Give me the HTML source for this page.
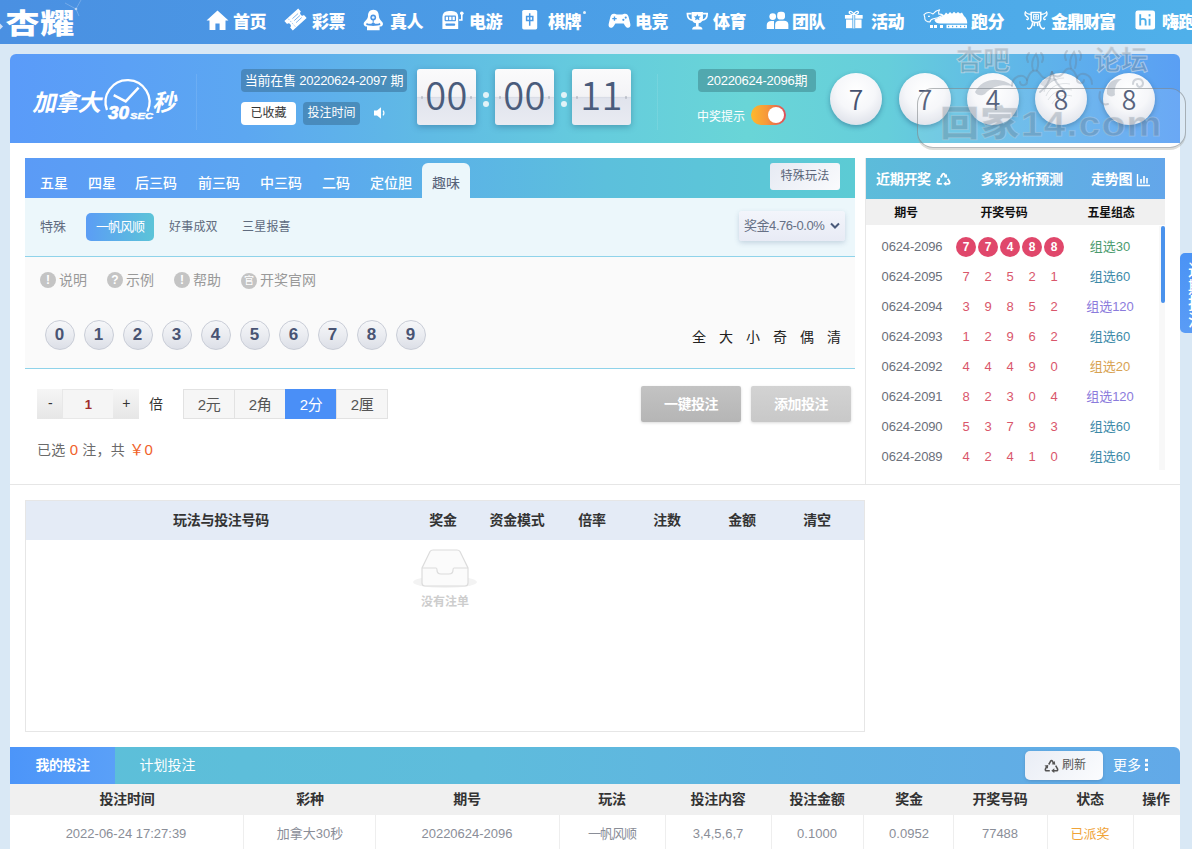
<!DOCTYPE html>
<html lang="zh-CN">
<head>
<meta charset="utf-8">
<title>加拿大30秒</title>
<style>
*{box-sizing:border-box;margin:0;padding:0}
html,body{width:1192px;height:849px;overflow:hidden}
body{background:#d9e8f5;font-family:"Liberation Sans","Noto Sans CJK SC",sans-serif;font-size:13px;color:#555;position:relative}
.abs{position:absolute}
/* NAV */
#nav{position:absolute;left:0;top:0;width:1192px;height:43px;background:linear-gradient(90deg,#4a90e2 0%,#4b9de6 45%,#4fb0ea 100%)}
#nav .it{position:absolute;top:0;height:43px;line-height:42px;color:#fff;font-family:"Liberation Serif","Noto Serif CJK SC",serif;font-weight:900;font-size:17px;white-space:nowrap;letter-spacing:-0.5px}
#nav svg{position:absolute}
#logo{position:absolute;left:5.5px;top:4.3px;font-family:"Liberation Sans","Noto Sans CJK SC",sans-serif;font-weight:900;font-size:34px;line-height:40px;color:#fff;letter-spacing:.7px;transform:scaleY(.834);transform-origin:0 50%;white-space:nowrap}

#nav{height:44px}
#nav .it{font-family:"Liberation Sans","Noto Sans CJK SC",sans-serif;font-weight:900;font-size:17px;letter-spacing:-0.6px;line-height:46px}
/* BANNER */
#banner{position:absolute;left:10px;top:54px;width:1170px;height:89px;border-radius:6px 6px 0 0;background:linear-gradient(90deg,#5a9bf9 0%,#5ca7f1 20%,#60bbe4 36%,#65ccdd 50%,#69d5d7 63%,#66cedb 75%,#60b7e8 86%,#5a9ff4 100%)}

#banner .pill{position:absolute;height:23px;line-height:23px;letter-spacing:-0.25px;border-radius:4px;color:#fff;font-size:13px;text-align:center;white-space:nowrap}
.flip{position:absolute;top:15px;width:59px;height:56px;border-radius:3px;background:linear-gradient(180deg,#fbfbfc 0%,#f3f3f6 49%,#d5d9e3 50%,#e1e4ed 53%,#e9ebf2 100%);box-shadow:0 2px 6px rgba(30,70,110,.35);color:#4a5c7c;font-family:"Noto Sans CJK SC","Liberation Sans",sans-serif;font-weight:350;font-size:38px;line-height:50px;text-align:center;letter-spacing:.5px}
.flip::before,.flip::after{content:"";position:absolute;top:27px;width:2px;height:3px;background:#bcc0ca;border-radius:1px}.flip::before{left:4px}.flip::after{right:4px}
.colon{position:absolute;width:6px;height:6px;border-radius:50%;background:#e2f3f8}
.ball{position:absolute;top:19px;width:52px;height:52px;border-radius:50%;background:radial-gradient(circle at 50% 35%,#ffffff 0%,#f6f7fa 45%,#dfe2ea 80%,#cfd3de 100%);box-shadow:0 2px 5px rgba(30,80,120,.45);color:#465270;font-family:"Noto Sans CJK SC","Liberation Sans",sans-serif;font-weight:350;font-size:26.5px;line-height:51px;text-align:center}
#main{position:absolute;left:10px;top:143px;width:1170px;height:706px;background:#fff}

/* PLAY PANEL */
#tabs{position:absolute;left:15px;top:15px;width:830px;height:40px;background:linear-gradient(90deg,#5b9bf6 0%,#5ba8ef 35%,#5cc0dc 70%,#5ccbd4 100%)}
#tabs .t{position:absolute;top:15px;color:#fff;font-size:14px;font-weight:500;line-height:20px;white-space:nowrap}
#tabs .act{position:absolute;left:397px;top:5px;width:48px;height:35px;background:#ecf7fb;border-radius:6px 6px 0 0;color:#566278;font-size:14px;line-height:40px;text-align:center}
#sub{position:absolute;left:15px;top:55px;width:830px;height:59px;background:#ecf7fb;border-bottom:1px solid #8fd3ea}
#sub .s{position:absolute;top:19px;font-size:13px;line-height:20px;color:#5f6b7e;white-space:nowrap}
#cont{position:absolute;left:15px;top:114px;width:830px;height:112px;background:#fafafa;border-bottom:1px solid #8fd3ea}
.hp{position:absolute;top:14px;height:18px;line-height:18px;font-size:14px;color:#999;white-space:nowrap}
.hp i{display:inline-block;width:16px;height:16px;border-radius:50%;background:#c4c4c4;color:#fff;font-style:normal;font-weight:700;font-size:12px;line-height:16px;text-align:center;vertical-align:1px;margin-right:3px}
.nb{position:absolute;top:63px;width:30px;height:30px;margin-left:.5px;border-radius:50%;border:1px solid #c9cdd7;background:linear-gradient(180deg,#f6f7f9 0%,#e9ebf0 55%,#dcdfe7 100%);color:#495473;font-weight:700;font-size:17px;line-height:28px;text-align:center}
.q{position:absolute;top:71px;font-size:14px;line-height:18px;color:#222;width:14px;text-align:center}
.mb{position:absolute;top:0;height:30px;line-height:29px;text-align:center;font-size:15px;color:#555;background:#f6f6f6;border:1px solid #e2e2e2;letter-spacing:-0.5px}
.bigbtn{position:absolute;top:243px;width:100px;height:36px;border-radius:2px;color:#fff;font-weight:700;font-size:14px;line-height:36px;text-align:center;letter-spacing:-0.5px;box-shadow:0 1px 3px rgba(0,0,0,.15)}

/* RIGHT PANEL */
#rp{position:absolute;left:855px;top:15px;width:300px;height:327px;border-left:1px solid #e8e8e8}
#rp .hd{position:absolute;left:0;top:0;width:299px;height:41px;background:linear-gradient(90deg,#5cbcda 0%,#60b0e2 55%,#63a6ea 100%);color:#fff;font-weight:700;font-size:14px;line-height:42px;letter-spacing:-0.3px}
#rp .hd span{position:absolute;top:0;white-space:nowrap}
#rp .th{position:absolute;left:0;top:41px;width:299px;height:26px;background:#f0f0f0;color:#111;font-weight:700;font-size:12px;line-height:28px;letter-spacing:-0.3px}
#rp .th span,#rp .r span{position:absolute;top:0;text-align:center;white-space:nowrap}
#rp .r{position:absolute;left:0;width:299px;height:30px;line-height:30px;font-size:13px;color:#6b6f7a}
#rp .r .p{left:15px;width:62px;letter-spacing:-0.15px}
#rp .r b{position:absolute;top:0;width:20px;text-align:center;font-weight:400;color:#d9566b}
#rp .r b.c{top:5px;height:20px;line-height:20px;border-radius:50%;background:#e0476b;color:#fff;font-weight:700;font-size:12px}
#rp .r .g{left:204px;width:80px}
.g30{color:#4b9b6e}.g60{color:#3d8aa8}.g120{color:#8b7bdc}.g20{color:#d8a252}
/* BET TABLE */
#bt{position:absolute;left:15px;top:357px;width:840px;height:232px;border:1px solid #e6e6e6}
#bt .h{position:absolute;left:0;top:0;width:838px;height:39px;background:#e4ebf6;color:#333;font-weight:700;font-size:14px;line-height:39px;letter-spacing:-0.3px}
#bt .h span{position:absolute;top:0;width:120px;text-align:center;white-space:nowrap}
/* BOTTOM */
#bb{position:absolute;left:0;top:604px;width:1170px;height:37px;border-radius:0 6px 0 0;background:linear-gradient(90deg,#5cc0d8 0%,#5ebcdc 40%,#62a9e8 100%);color:#fff;font-size:14px;line-height:37px}
#bth{position:absolute;left:0;top:641px;width:1170px;height:31px;background:#f0f0f0;color:#333;font-weight:700;font-size:14px;line-height:31px;letter-spacing:-0.3px}
#btr{position:absolute;left:0;top:672px;width:1170px;height:34px;color:#8a8e98;font-size:13px;line-height:38px}
#bth span,#btr span{position:absolute;top:0;width:140px;text-align:center;white-space:nowrap}
#btr i{position:absolute;top:0;width:1px;height:34px;background:#eee}
</style>
</head>
<body>
<div id="nav">
  <div id="logo">杏耀</div>
  <div style="position:absolute;left:-3px;top:24px;width:5px;height:5px;background:#cfe0f6;transform:rotate(45deg)"></div>
  <svg style="left:60px;top:0" width="30" height="22" viewBox="0 0 30 22"><path d="M16 9 L5 3 M16 9 L21 0 M16 9 L19 16" stroke="#fff" stroke-opacity=".22" stroke-width="1" fill="none"/><circle cx="16" cy="9" r="1.3" fill="#fff" fill-opacity=".55"/></svg>
  <!-- home -->
  <svg style="left:206px;top:10px" width="23" height="21" viewBox="0 0 23 21"><path d="M11.5 0.5 L22.5 10.5 L19.5 10.5 L19.5 20 L13.6 20 L13.6 13.5 L9.4 13.5 L9.4 20 L3.5 20 L3.5 10.5 L0.5 10.5 Z" fill="#fff"/></svg>
  <div class="it" style="left:233px">首页</div>
  <!-- ticket -->
  <svg style="left:283px;top:7px" width="25" height="25" viewBox="0 0 25 25"><g transform="rotate(-42 12.5 12.5)"><path d="M3.2 6.2 H21.8 V10.2 A2.3 2.3 0 0 0 21.8 14.8 V18.8 H3.2 V14.8 A2.3 2.3 0 0 0 3.2 10.2 Z" fill="#fff"/><path d="M7.6 7 V18" stroke="#4a93e4" stroke-opacity=".55" stroke-width=".9" stroke-dasharray="1.6 1.4"/><path d="M10.8 9.8 H18.4 M10.8 12.5 H18.4 M10.8 15.2 H18.4" stroke="#4a93e4" stroke-opacity=".7" stroke-width=".9"/></g></svg>
  <div class="it" style="left:312px">彩票</div>
  <!-- live person -->
  <svg style="left:363px;top:9px" width="21" height="22" viewBox="0 0 21 22"><path d="M10.4 0.7 C6.6 0.7 5 3.6 5 6.6 C5 10 2.6 11.4 1 13.6 C0.2 15.2 0.8 16.8 2.6 17.6 L4 17.6 L4 21.2 L16.6 21.2 L16.6 17.6 L18.2 17.6 C20 16.8 20.4 15.2 19.6 13.6 C18 11.4 15.8 10 15.8 6.6 C15.8 3.6 14.2 0.7 10.4 0.7 Z" fill="#fff"/><circle cx="10.2" cy="8.5" r="2.9" fill="#4a95e5"/><circle cx="10.2" cy="8.5" r="1.35" fill="#e8f4ff"/><path d="M10.2 11 V13.6" stroke="#4a95e5" stroke-width="1"/><path d="M3.6 14 Q7 15.6 10.2 14.2 Q13.4 15.6 17 14 L17.4 16 Q13.4 17 10.2 16.6 Q7 17 3.2 16 Z" fill="#4a95e5"/><circle cx="10.2" cy="15.3" r="1.8" fill="#4a95e5"/></svg>
  <div class="it" style="left:390px">真人</div>
  <!-- slot machine -->
  <svg style="left:441px;top:10px" width="23" height="20" viewBox="0 0 23 20"><path d="M1.4 19 V7 Q1.4 1 8 1 H10.6 Q17.2 1 17.2 7 V19 Z" fill="#fff"/><rect x="3.6" y="5.6" width="11.4" height="5.6" rx="1" fill="#4a97e5"/><rect x="4.8" y="6.7" width="2.3" height="3.4" fill="#fff"/><rect x="8.15" y="6.7" width="2.3" height="3.4" fill="#fff"/><rect x="11.5" y="6.7" width="2.3" height="3.4" fill="#fff"/><rect x="4.4" y="13.6" width="9.8" height="2.2" rx="1" fill="#4a97e5"/><circle cx="20.8" cy="3.2" r="1.8" fill="#fff"/><path d="M20.8 3.4 V10 H18" stroke="#fff" stroke-width="1.6" fill="none"/></svg>
  <div class="it" style="left:469px">电游</div>
  <!-- card -->
  <svg style="left:521px;top:9px" width="18" height="22" viewBox="0 0 18 22"><rect x="1.2" y="1" width="15" height="19.4" rx="1.6" fill="#fff"/><path d="M8.7 4.2 V16.8 M5.6 7.4 H11.8 V11.4 H5.6 Z" stroke="#4a9ae6" stroke-width="1.5" fill="none"/></svg>
  <div class="it" style="left:548px">棋牌</div>
  <div style="position:absolute;left:583px;top:11px;width:3px;height:3px;border-radius:50%;background:#e6f2fc"></div>
  <!-- gamepad -->
  <svg style="left:607.5px;top:13px" width="23" height="15.5" viewBox="0 0 27 19" preserveAspectRatio="none"><path d="M7 1 C4.4 1 3.2 2.8 2.6 5.4 L0.8 13.5 C0.2 16.4 1.6 18 3.4 18 C5 18 6 17 7.2 15.2 L8.6 13 L18.4 13 L19.8 15.2 C21 17 22 18 23.6 18 C25.4 18 26.8 16.4 26.2 13.5 L24.4 5.4 C23.8 2.8 22.6 1 20 1 C18.6 1 18 1.8 16.6 1.8 L10.4 1.8 C9 1.8 8.4 1 7 1 Z" fill="#fff"/><path d="M7.6 4.4 V9.6 M5 7 H10.2" stroke="#4a9de7" stroke-width="1.6"/><circle cx="18" cy="8.4" r="1.3" fill="#4a9de7"/><circle cx="20.8" cy="5.6" r="1.3" fill="#4a9de7"/></svg>
  <div class="it" style="left:635px">电竞</div>
  <!-- trophy -->
  <svg style="left:686px;top:11.3px" width="22.6" height="19.3" viewBox="0 0 24 22" preserveAspectRatio="none"><path d="M6 1 H18 V8 C18 12 15.4 14.2 12 14.2 C8.6 14.2 6 12 6 8 Z" fill="#fff"/><path d="M6 3 H1.5 C1.5 7.5 3.5 10 7 10.4 M18 3 H22.5 C22.5 7.5 20.5 10 17 10.4" stroke="#fff" stroke-width="1.8" fill="none"/><rect x="10.6" y="13.5" width="2.8" height="4.5" fill="#fff"/><path d="M6.5 21 C6.5 18.4 8.4 17.4 12 17.4 C15.6 17.4 17.5 18.4 17.5 21 Z" fill="#fff"/><path d="M12 3.6 L13.1 6 L15.7 6.3 L13.8 8 L14.3 10.6 L12 9.3 L9.7 10.6 L10.2 8 L8.3 6.3 L10.9 6 Z" fill="#4aa0e7"/></svg>
  <div class="it" style="left:713px">体育</div>
  <!-- team -->
  <svg style="left:765.7px;top:10.7px" width="23.3" height="19.5" viewBox="0 0 25 21" preserveAspectRatio="none"><circle cx="7.2" cy="6" r="3.6" fill="#fff"/><path d="M0.8 19.5 V15.2 C0.8 12.4 3 10.8 5.6 10.8 H8.6 V19.5 Z" fill="#fff"/><rect x="12" y="0.8" width="8.4" height="8.4" rx="3.4" fill="#fff"/><path d="M9.8 19.5 V14.6 C9.8 12 11.8 10.6 14.2 10.6 H19.6 C22 10.6 24 12 24 14.6 V19.5 Z" fill="#fff"/></svg>
  <div class="it" style="left:792px">团队</div>
  <!-- gift -->
  <svg style="left:843.9px;top:10.2px" width="19.6" height="19.2" viewBox="0 0 21 23" preserveAspectRatio="none"><path d="M10.5 5.6 C8 5.4 5.2 4.6 5.6 2.6 C6 0.8 9.4 1.4 10.5 5.6 C11.6 1.4 15 0.8 15.4 2.6 C15.8 4.6 13 5.4 10.5 5.6 Z" fill="none" stroke="#fff" stroke-width="1.5"/><rect x="1" y="6" width="19" height="4.4" fill="#fff"/><rect x="2.2" y="11.4" width="16.6" height="10.4" fill="#fff"/><rect x="9" y="6" width="3" height="16" fill="#4aa5e8"/><rect x="9.9" y="6" width="1.2" height="16" fill="#fff"/></svg>
  <div class="it" style="left:871px">活动</div>
  <!-- rhino -->
  <svg style="left:922px;top:9px" width="46" height="21" viewBox="0 0 46 21"><path d="M2 5.6 C4.4 3.2 8 3 11 5 C12.6 2.8 14.8 1.4 17.6 0.8 C16.4 2.6 16.2 4 16.8 5.2 C18.4 5 20 5.4 21.4 6.4 L19 7 C17 8.6 14 9.4 11.4 9.8 C9.4 10.2 8.2 11.6 8 13 L5.4 12.6 C3.6 12 2.6 10.2 2.8 8.4 Z M6 7.4 L8 7.2" fill="none" stroke="#fff" stroke-width="1.1" stroke-linejoin="round"/><path d="M12.6 10.4 L21.8 6.4 L24 3.6 L26 5.2 L28 3 L30 4.8 L32 2.8 L34 4.6 L36 3 L38 4.6 L40 3.6 L42 7 C44.4 9 45.2 11.4 45.2 13.6 L45.2 14.6 L18 14.6 C15 14.6 13.4 13.6 12.6 11.6 Z" fill="#fff"/><g fill="#fff"><rect x="8" y="16" width="3" height="3"/><rect x="12" y="16" width="3" height="3"/><rect x="18" y="16" width="3" height="3"/><rect x="24.5" y="15.8" width="20.5" height="3.4"/></g><g fill="#4cabe9"><rect x="26" y="16.8" width="1.2" height="1.4"/><rect x="30" y="16.8" width="1.2" height="1.4"/><rect x="34" y="16.8" width="1.2" height="1.4"/><rect x="38" y="16.8" width="1.2" height="1.4"/><rect x="42" y="16.8" width="1.2" height="1.4"/></g></svg>
  <div class="it" style="left:971px">跑分</div>
  <!-- ding -->
  <svg style="left:1023.5px;top:10.5px" width="24" height="19.5" viewBox="0 0 24 19.5"><path d="M7.2 1.6 H16.8 V8.6 C16.8 10.4 15.4 11.4 12 11.4 C8.6 11.4 7.2 10.4 7.2 8.6 Z" fill="none" stroke="#fff" stroke-width="1.5"/><path d="M9.4 3.6 H14.6 V8.2 H9.4 Z M12 3.6 V8.2 M9.4 5.9 H14.6" stroke="#fff" stroke-width="1" fill="none"/><path d="M7.2 3.4 C4.6 3.2 2.2 2.4 1.4 1 C0.6 3 1.2 4.6 2.6 5.4 C4 6.2 4.6 7 4.2 8 C3.8 9 2.6 8.8 2.6 7.8 M16.8 3.4 C19.4 3.2 21.8 2.4 22.6 1 C23.4 3 22.8 4.6 21.4 5.4 C20 6.2 19.4 7 19.8 8 C20.2 9 21.4 8.8 21.4 7.8" stroke="#fff" stroke-width="1.3" fill="none"/><path d="M8.6 11.2 C8.4 14 7.6 16.4 5.6 17.6 C4.4 18.2 3.4 17.6 3.8 16.4 M15.4 11.2 C15.6 14 16.4 16.4 18.4 17.6 C19.6 18.2 20.6 17.6 20.2 16.4 M10.6 11.6 L10.2 15.2 M13.4 11.6 L13.8 15.2" stroke="#fff" stroke-width="1.6" fill="none"/></svg>
  <div class="it" style="left:1051px;letter-spacing:-1px">金鼎财富</div>
  <!-- hi -->
  <svg style="left:1135px;top:10px" width="20.5" height="20" viewBox="0 0 22 22" preserveAspectRatio="none"><rect x="0.5" y="0.5" width="21" height="21" rx="2.6" fill="#fff"/><path d="M5.6 4.6 V17 M5.6 11.8 C5.6 9 11.4 9 11.4 12 V17 M15.6 9.6 V17" stroke="#4cafea" stroke-width="2" fill="none"/><rect x="14.6" y="4.6" width="2" height="2.4" fill="#4cafea"/></svg>
  <div class="it" style="left:1162px">嗨跑</div>

</div>
<div id="banner">
  <!-- logo -->
  <div style="position:absolute;left:23.5px;top:34px;color:#fff;font-size:23.5px;line-height:30px;font-weight:700;transform:skewX(-13deg);letter-spacing:-0.8px;white-space:nowrap">加拿大</div>
  <svg style="position:absolute;left:88px;top:21px" width="70" height="52" viewBox="0 0 70 52"><path d="M9 35 A22 22 0 1 1 49.4 36.5" fill="none" stroke="#fff" stroke-width="2.3"/><path d="M15.7 20.2 L27.7 26.4 L40.6 12.7" fill="none" stroke="#fff" stroke-width="2.5"/><text x="10" y="44.4" fill="#fff" font-family="Liberation Sans,sans-serif" font-weight="700" font-style="italic" font-size="18" textLength="21" lengthAdjust="spacingAndGlyphs" stroke="#fff" stroke-width=".7">30</text><text x="32" y="44.4" fill="#fff" font-family="Liberation Sans,sans-serif" font-weight="700" font-style="italic" font-size="8.6" textLength="23" lengthAdjust="spacingAndGlyphs" stroke="#fff" stroke-width=".4">SEC</text></svg>
  <div style="position:absolute;left:143.5px;top:34px;color:#fff;font-size:23.5px;line-height:30px;font-weight:700;transform:skewX(-13deg);white-space:nowrap">秒</div>
  <div style="position:absolute;left:186px;top:20px;width:1px;height:56px;background:rgba(255,255,255,.1)"></div>
  <div class="pill" style="left:231px;top:15px;width:166px;background:rgba(62,118,160,.62)">当前在售 20220624-2097 期</div>
  <div class="pill" style="left:231px;top:48px;width:55px;background:#fff;color:#333;font-size:12px;letter-spacing:0">已收藏</div>
  <div class="pill" style="left:293px;top:48px;width:57px;background:rgba(62,118,160,.62);font-size:12px;letter-spacing:0">投注时间</div>
  <svg style="position:absolute;left:363px;top:52px" width="14" height="14" viewBox="0 0 14 14"><path d="M1 4.6 H4 L8 1.2 V12.8 L4 9.4 H1 Z" fill="#fff"/><path d="M10 4.6 C11.2 5.8 11.2 8.2 10 9.4" stroke="#fff" stroke-width="1.3" fill="none"/></svg>
  <div class="flip" style="left:407px">00</div>
  <div class="colon" style="left:472.5px;top:37.5px"></div><div class="colon" style="left:472.5px;top:47px"></div>
  <div class="flip" style="left:485px">00</div>
  <div class="colon" style="left:550.5px;top:37.5px"></div><div class="colon" style="left:550.5px;top:47px"></div>
  <div class="flip" style="left:562px">11</div>
  <div style="position:absolute;left:647px;top:20px;width:1px;height:56px;background:rgba(255,255,255,.1)"></div>
  <div class="pill" style="left:688px;top:15px;width:118px;background:rgba(66,140,146,.6)">20220624-2096期</div>
  <div style="position:absolute;left:687px;top:55px;color:#fff;font-size:12px;line-height:16px;white-space:nowrap">中奖提示</div>
  <div style="position:absolute;left:741px;top:51px;width:35px;height:20px;border-radius:10px;background:linear-gradient(90deg,#fdb92c 0%,#f7983a 45%,#de4c5c 100%)"><div style="position:absolute;right:2px;top:2px;width:16px;height:16px;border-radius:50%;background:#fff"></div></div>
  <div class="ball" style="left:820px">7</div>
  <div class="ball" style="left:889px">7</div>
  <div class="ball" style="left:957px">4</div>
  <div class="ball" style="left:1025px">8</div>
  <div class="ball" style="left:1093px">8</div>
</div>
<div id="main">
  <div id="tabs">
    <div class="t" style="left:15px">五星</div>
    <div class="t" style="left:63px">四星</div>
    <div class="t" style="left:110px">后三码</div>
    <div class="t" style="left:173px">前三码</div>
    <div class="t" style="left:235px">中三码</div>
    <div class="t" style="left:297px">二码</div>
    <div class="t" style="left:345px">定位胆</div>
    <div class="act">趣味</div>
    <div style="position:absolute;left:745px;top:5px;width:70px;height:27px;border-radius:3px;background:linear-gradient(135deg,#e6eaf3,#fafbfd);color:#5a6478;font-size:12px;line-height:26px;text-align:center;letter-spacing:.2px">特殊玩法</div>
  </div>
  <div id="sub">
    <div class="s" style="left:15px">特殊</div>
    <div style="position:absolute;left:61px;top:15px;width:68px;height:28px;border-radius:5px;background:linear-gradient(90deg,#5b9df5,#5cc4d8);color:#fff;font-size:13px;line-height:28px;text-align:center;letter-spacing:-1px">一帆风顺</div>
    <div class="s" style="left:144px;font-size:12px;letter-spacing:.2px">好事成双</div>
    <div class="s" style="left:217px;font-size:12px;letter-spacing:.2px">三星报喜</div>
    <div style="position:absolute;left:714px;top:13px;width:106px;height:30px;border-radius:3px;background:linear-gradient(180deg,#f3f5fb,#e8ebf5);box-shadow:0 2px 5px rgba(80,110,150,.25);color:#667085;font-size:13px;line-height:29px;padding-left:5px;white-space:nowrap;letter-spacing:-0.45px">奖金4.76-0.0%<svg style="position:absolute;right:5px;top:11px" width="10" height="8" viewBox="0 0 10 8"><path d="M1 1.5 L5 5.5 L9 1.5" fill="none" stroke="#4a5a7a" stroke-width="2"/></svg></div>
  </div>
  <div id="cont">
    <div class="hp" style="left:15px"><i>!</i>说明</div>
    <div class="hp" style="left:82px"><i>?</i>示例</div>
    <div class="hp" style="left:149px"><i>!</i>帮助</div>
    <div class="hp" style="left:216px"><i style="font-size:10px;font-weight:400">官</i>开奖官网</div>
    <div class="nb" style="left:19px">0</div>
    <div class="nb" style="left:58px">1</div>
    <div class="nb" style="left:97px">2</div>
    <div class="nb" style="left:136px">3</div>
    <div class="nb" style="left:175px">4</div>
    <div class="nb" style="left:214px">5</div>
    <div class="nb" style="left:253px">6</div>
    <div class="nb" style="left:292px">7</div>
    <div class="nb" style="left:331px">8</div>
    <div class="nb" style="left:370px">9</div>
    <div class="q" style="left:667px">全</div>
    <div class="q" style="left:694px">大</div>
    <div class="q" style="left:721px">小</div>
    <div class="q" style="left:748px">奇</div>
    <div class="q" style="left:775px">偶</div>
    <div class="q" style="left:802px">清</div>
  </div>
  <!-- multiplier row -->
  <div style="position:absolute;left:27px;top:246px;width:360px;height:30px">
    <div class="mb" style="left:0;width:26px;background:linear-gradient(180deg,#f5f5f5,#e6e6e6);border:0;color:#333;font-size:14px">-</div>
    <div class="mb" style="left:25px;width:52px;background:#f5f5f5;border:1px solid #e8e8e8;color:#a02c2c;font-weight:700;font-size:13px">1</div>
    <div class="mb" style="left:76px;width:26px;background:linear-gradient(180deg,#f5f5f5,#e6e6e6);border:0;color:#333;font-size:14px">+</div>
    <div style="position:absolute;left:112px;top:0;line-height:30px;font-size:14px;color:#333">倍</div>
    <div class="mb" style="left:146px;width:52px">2元</div>
    <div class="mb" style="left:197px;width:52px">2角</div>
    <div class="mb" style="left:248px;width:52px;background:#4a8ff7;border-color:#4a8ff7;color:#fff">2分</div>
    <div class="mb" style="left:299px;width:52px">2厘</div>
  </div>
  <div class="bigbtn" style="left:631px;background:linear-gradient(180deg,#c3c3c3,#b5b5b5)">一键投注</div>
  <div class="bigbtn" style="left:741px;background:linear-gradient(180deg,#d3d3d3,#c8c8c8)">添加投注</div>
  <div style="position:absolute;left:27px;top:297px;font-size:14px;line-height:20px;color:#6a6a6a;white-space:nowrap;letter-spacing:.25px">已选 <span style="color:#f0622a;font-size:15px">0</span> 注，共 <span style="color:#f0622a;font-size:15px">￥0</span></div>
  <div id="rp">
    <div class="hd"><span style="left:10px">近期开奖</span><svg style="position:absolute;left:70px;top:14px" width="15" height="14" viewBox="0 0 30 28"><g fill="none" stroke="#fff" stroke-width="3.6" stroke-linejoin="round"><path d="M9.5 11 L13 4.6 Q15 1.6 17 4.6 L19.4 8.8"/><path d="M23.4 13.4 L27 19.6 Q28.4 23.4 24.4 23.6 L18.6 23.6"/><path d="M11.6 23.6 L5.6 23.6 Q1.6 23.4 3 19.6 L5.4 15.4"/></g><g fill="#fff"><path d="M15.4 10.6 L22.6 11.6 L21.4 4.2 Z"/><path d="M20.6 18.6 L14.6 23.6 L20.6 28 Z"/><path d="M1 13.2 L8.4 12 L7.8 19.4 Z"/></g></svg><span style="left:114.5px">多彩分析预测</span><span style="left:225px">走势图</span><svg style="position:absolute;left:270px;top:15px" width="15" height="14" viewBox="0 0 15 14"><path d="M1.5 1 V12.5 H14" fill="none" stroke="#fff" stroke-width="1.4"/><path d="M5 10.5 V6 M8 10.5 V3 M11 10.5 V5" stroke="#fff" stroke-width="1.6"/></svg></div>
    <div class="th"><span style="left:14px;width:52px">期号</span><span style="left:98px;width:80px">开奖号码</span><span style="left:205px;width:80px">五星组态</span></div>
    <div class="r" style="top:74px"><span class="p">0624-2096</span><b class="c" style="left:90px">7</b><b class="c" style="left:112px">7</b><b class="c" style="left:134px">4</b><b class="c" style="left:156px">8</b><b class="c" style="left:178px">8</b><span class="g g30">组选30</span></div>
    <div class="r" style="top:104px"><span class="p">0624-2095</span><b style="left:90px">7</b><b style="left:112px">2</b><b style="left:134px">5</b><b style="left:156px">2</b><b style="left:178px">1</b><span class="g g60">组选60</span></div>
    <div class="r" style="top:134px"><span class="p">0624-2094</span><b style="left:90px">3</b><b style="left:112px">9</b><b style="left:134px">8</b><b style="left:156px">5</b><b style="left:178px">2</b><span class="g g120">组选120</span></div>
    <div class="r" style="top:164px"><span class="p">0624-2093</span><b style="left:90px">1</b><b style="left:112px">2</b><b style="left:134px">9</b><b style="left:156px">6</b><b style="left:178px">2</b><span class="g g60">组选60</span></div>
    <div class="r" style="top:194px"><span class="p">0624-2092</span><b style="left:90px">4</b><b style="left:112px">4</b><b style="left:134px">4</b><b style="left:156px">9</b><b style="left:178px">0</b><span class="g g20">组选20</span></div>
    <div class="r" style="top:224px"><span class="p">0624-2091</span><b style="left:90px">8</b><b style="left:112px">2</b><b style="left:134px">3</b><b style="left:156px">0</b><b style="left:178px">4</b><span class="g g120">组选120</span></div>
    <div class="r" style="top:254px"><span class="p">0624-2090</span><b style="left:90px">5</b><b style="left:112px">3</b><b style="left:134px">7</b><b style="left:156px">9</b><b style="left:178px">3</b><span class="g g60">组选60</span></div>
    <div class="r" style="top:284px"><span class="p">0624-2089</span><b style="left:90px">4</b><b style="left:112px">2</b><b style="left:134px">4</b><b style="left:156px">1</b><b style="left:178px">0</b><span class="g g60">组选60</span></div>
    <div style="position:absolute;left:293px;top:68px;width:6px;height:244px;background:#f8f8f8"></div>
    <div style="position:absolute;left:295px;top:68px;width:4px;height:77px;border-radius:2px;background:#4a92ec"></div>
  </div>
  <div style="position:absolute;left:0;top:341px;width:1170px;height:1px;background:#e6e6e6"></div>
  <div id="bt">
    <div class="h"><span style="left:135px">玩法与投注号码</span><span style="left:357px">奖金</span><span style="left:431px">资金模式</span><span style="left:506px">倍率</span><span style="left:581px">注数</span><span style="left:656px">金额</span><span style="left:731px">清空</span></div>
    <svg style="position:absolute;left:386px;top:46px" width="66" height="46" viewBox="0 0 66 46"><ellipse cx="33" cy="35" rx="32" ry="6" fill="#f3f3f3"/><path d="M10 21 L18 4.5 Q19 3 21 3 H45 Q47 3 48 4.5 L56 21 V36 Q56 39 53 39 H13 Q10 39 10 36 Z" fill="#fbfbfb" stroke="#dcdcdc" stroke-width="1.2"/><path d="M10 21 H24 Q25 21 25 23 Q25 27 29 27 H37 Q41 27 41 23 Q41 21 42 21 H56" fill="none" stroke="#dcdcdc" stroke-width="1.2"/></svg>
    <div style="position:absolute;left:359px;top:93px;width:120px;text-align:center;color:#cdcdcd;font-size:12px;line-height:16px;font-weight:700">没有注单</div>
  </div>
  <div id="bb">
    <div style="position:absolute;left:0;top:0;width:105px;height:37px;background:linear-gradient(90deg,#4c95f9,#5aa0f8);text-align:center;font-weight:700;letter-spacing:-0.5px">我的投注</div>
    <div style="position:absolute;left:115px;top:0;width:85px;text-align:center">计划投注</div>
    <div style="position:absolute;left:1015px;top:4px;width:78px;height:29px;border-radius:5px;background:linear-gradient(135deg,#e9edf5,#fbfcfe);box-shadow:0 1px 3px rgba(60,90,130,.3);color:#555;font-size:12px;line-height:29px;padding-left:37px;letter-spacing:0"><svg style="position:absolute;left:19px;top:8px" width="15" height="14" viewBox="0 0 30 28"><g fill="none" stroke="#555" stroke-width="3.2" stroke-linejoin="round"><path d="M9.5 11 L13 4.6 Q15 1.6 17 4.6 L19.4 8.8"/><path d="M23.4 13.4 L27 19.6 Q28.4 23.4 24.4 23.6 L18.6 23.6"/><path d="M11.6 23.6 L5.6 23.6 Q1.6 23.4 3 19.6 L5.4 15.4"/></g><g fill="#555"><path d="M15.4 10.6 L22.6 11.6 L21.4 4.2 Z"/><path d="M20.6 18.6 L14.6 23.6 L20.6 28 Z"/><path d="M1 13.2 L8.4 12 L7.8 19.4 Z"/></g></svg>刷新</div>
    <div style="position:absolute;left:1103px;top:0;white-space:nowrap">更多<span style="display:inline-block;width:3px;height:13px;margin-left:4px;vertical-align:-1px;background:radial-gradient(circle,#fff 1.4px,transparent 1.6px) 0 0/3px 4.6px repeat-y"></span></div>
  </div>
  <div id="bth"><span style="left:47px">投注时间</span><span style="left:230px">彩种</span><span style="left:387px">期号</span><span style="left:532px">玩法</span><span style="left:638px">投注内容</span><span style="left:737px">投注金额</span><span style="left:829px">奖金</span><span style="left:920px">开奖号码</span><span style="left:1010px">状态</span><span style="left:1076px">操作</span></div>
  <div id="btr"><span style="left:46px">2022-06-24 17:27:39</span><span style="left:230px">加拿大30秒</span><span style="left:387px">20220624-2096</span><span style="left:532px;letter-spacing:-1px">一帆风顺</span><span style="left:638px">3,4,5,6,7</span><span style="left:737px">0.1000</span><span style="left:829px">0.0952</span><span style="left:920px">77488</span><span style="left:1010px;color:#f0a338">已派奖</span>
    <i style="left:233px"></i><i style="left:365px"></i><i style="left:549px"></i><i style="left:655px"></i><i style="left:761px"></i><i style="left:853px"></i><i style="left:943px"></i><i style="left:1037px"></i><i style="left:1123px"></i>
  </div>
</div>

<!-- watermark -->
<div style="position:absolute;left:917px;top:88px;width:269px;height:60px;border-radius:16px;border:1px solid rgba(120,125,130,.55);background:rgba(255,255,255,.10);box-shadow:0 2px 0 rgba(160,160,150,.35)"></div>
<div style="position:absolute;left:956px;top:46px;font-size:27px;line-height:30px;font-weight:700;color:rgba(130,140,150,.38);-webkit-text-stroke:1px rgba(225,232,240,.55);white-space:nowrap;letter-spacing:0">杏吧</div>
<div style="position:absolute;left:1094px;top:46px;font-size:27px;line-height:30px;font-weight:700;color:rgba(130,140,150,.38);-webkit-text-stroke:1px rgba(225,232,240,.55);white-space:nowrap">论坛</div>
<svg style="position:absolute;left:940px;top:40px" width="252" height="112" viewBox="940 40 252 112"><g fill="none" stroke="rgba(105,120,135,.30)" stroke-width="2" stroke-linecap="round"><path d="M1012 86 C1012 76 1024 72 1027 80 C1028 86 1020 87 1020 82"/><path d="M1027 80 C1030 70 1036 68 1040 74 C1044 80 1050 80 1052 72"/><path d="M1033 70 C1031 64 1033 58 1036 54 C1038 58 1039 64 1037 70"/><path d="M1028 62 C1026 58 1027 55 1029 53 M1042 62 C1044 58 1043 55 1041 53"/><path d="M1092 84 C1092 74 1080 70 1077 78 C1076 84 1084 85 1084 80"/><path d="M1077 78 C1074 68 1068 66 1064 72 C1060 78 1054 78 1052 72"/><path d="M1071 68 C1069 62 1071 56 1074 52 C1076 56 1077 62 1075 68"/><path d="M1066 60 C1064 56 1065 53 1067 51 M1080 60 C1082 56 1081 53 1079 51"/><path d="M1052 72 C1050 80 1046 88 1040 92 M1052 72 C1054 80 1058 86 1064 90"/><path d="M1133 84 C1133 78 1142 77 1143 83 C1143 88 1137 88 1137 84"/><path d="M1100 92 C1098 100 1102 106 1108 104"/></g><g fill="rgba(105,120,135,.30)"><path d="M975 92 C982 78 1000 76 1013 86 C1002 84 992 86 985 94 C982 96 977 96 975 92 Z"/><path d="M1107 94 C1106 84 1112 78 1122 79 C1116 82 1114 88 1115 95 C1113 97 1109 97 1107 94 Z"/><path d="M1040 84 C1044 78 1052 76 1058 80 C1052 80 1048 84 1046 88 Z" fill-opacity=".7"/></g><g fill="none" stroke="rgba(150,160,170,.28)" stroke-width="1"><path d="M1046 96 C1050 86 1060 82 1070 84 M1048 100 C1054 90 1064 88 1072 90 M1052 104 C1056 96 1064 94 1072 96 M1044 92 C1046 84 1054 78 1064 78"/></g></svg>
<div style="position:absolute;left:940px;top:98px;font-size:35px;line-height:52px;font-weight:900;color:rgba(110,125,140,.36);-webkit-text-stroke:1px rgba(215,225,235,.3);white-space:nowrap;letter-spacing:1px;transform:scaleX(1.12);transform-origin:0 0;font-family:'Liberation Sans','Noto Sans CJK SC',sans-serif">回家14.com</div>
<!-- side tab -->
<div style="position:absolute;left:1180px;top:253px;width:20px;height:80px;border-radius:5px 0 0 5px;background:linear-gradient(180deg,#4a93f5,#5a9cf6);color:#fff;font-size:16px;line-height:16.5px;font-weight:500;padding:10px 0 0 8px;overflow:hidden"><div style="width:16px;word-break:break-all">近期投注</div></div>

</body>
</html>
